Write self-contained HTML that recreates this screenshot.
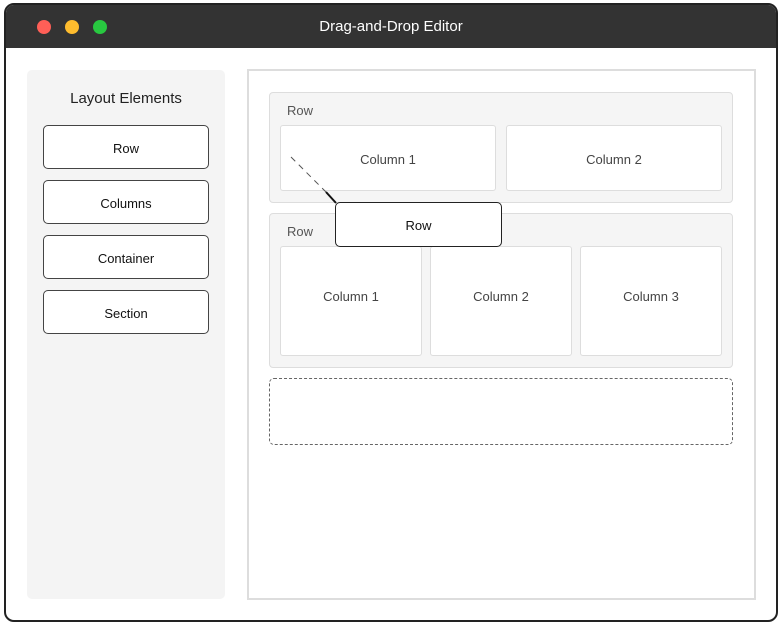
<!DOCTYPE html>
<html><head><style>
*{box-sizing:border-box;margin:0;padding:0}
body{width:782px;height:624px;background:#fff;font-family:"Liberation Sans",Arial,sans-serif;position:relative;overflow:hidden}
.a{position:absolute}
.win{left:4px;top:3px;width:774px;height:619px;border:2px solid #222;border-radius:10px;overflow:hidden}
.bar{left:0;top:0;width:100%;height:43px;background:#333;color:#fff;font-size:15px;text-align:center;line-height:43px}
.dot{width:14px;height:14px;border-radius:50%;top:15px}
.side{left:27px;top:70px;width:198px;height:529px;background:#f4f4f4;border-radius:5px}
.btn{left:43px;width:166px;height:44px;background:#fff;border:1px solid #444;border-radius:5px;font-size:13px;text-align:center;line-height:45px;color:#111}
.canvas{left:247px;top:69px;width:509px;height:531px;border:2px solid #ddd}
.row{left:269px;width:464px;background:#f5f5f5;border:1px solid #ddd;border-radius:4px}
.lbl{font-size:13px;color:#555}
.col{background:#fff;border:1px solid #ddd;border-radius:3px;font-size:13px;color:#444;display:flex;align-items:center;justify-content:center;padding-top:2px}
.big{padding-top:0;padding-bottom:10px}
</style></head><body>
<div class="a win"><div class="a bar">Drag-and-Drop Editor</div>
<div class="a dot" style="left:31px;background:#ff5f57"></div>
<div class="a dot" style="left:59px;background:#febc2e"></div>
<div class="a dot" style="left:87px;background:#28c840"></div>
</div>
<div class="a side"></div>
<div class="a" style="left:27px;top:90px;width:198px;text-align:center;font-size:15px;color:#222">Layout Elements</div>
<div class="a btn" style="top:125px">Row</div>
<div class="a btn" style="top:180px">Columns</div>
<div class="a btn" style="top:235px">Container</div>
<div class="a btn" style="top:290px">Section</div>
<div class="a canvas"></div>
<div class="a row" style="top:92px;height:111px"></div>
<div class="a lbl" style="left:287px;top:103px">Row</div>
<div class="a col" style="left:280px;top:125px;width:216px;height:66px">Column 1</div>
<div class="a col" style="left:506px;top:125px;width:216px;height:66px">Column 2</div>
<div class="a row" style="top:213px;height:155px"></div>
<div class="a lbl" style="left:287px;top:224px">Row</div>
<div class="a col big" style="left:280px;top:246px;width:142px;height:110px">Column 1</div>
<div class="a col big" style="left:430px;top:246px;width:142px;height:110px">Column 2</div>
<div class="a col big" style="left:580px;top:246px;width:142px;height:110px">Column 3</div>
<div class="a" style="left:269px;top:378px;width:464px;height:67px;border:1px dashed #666;border-radius:5px"></div>
<svg class="a" style="left:0;top:0" width="782" height="624"><line x1="291" y1="157" x2="326" y2="192" stroke="#555" stroke-dasharray="6,5"/><line x1="326" y1="192" x2="336" y2="203" stroke="#111" stroke-width="2"/></svg>
<div class="a btn" style="left:335px;top:202px;width:167px;height:45px;line-height:46px;border-color:#222">Row</div>
</body></html>
